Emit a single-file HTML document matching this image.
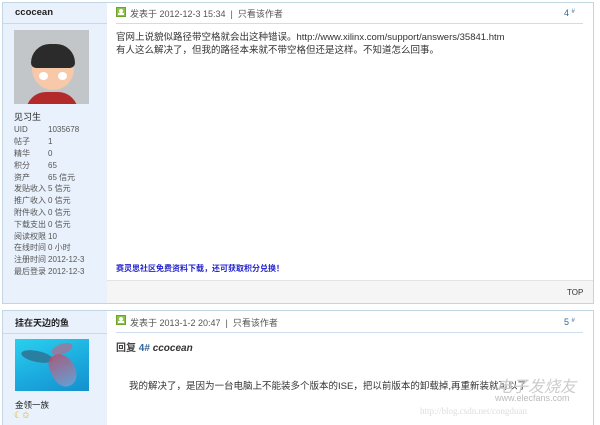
<!DOCTYPE html>
<html style="width:600px;height:425px;overflow:hidden"><head><meta charset="utf-8"><style>
*{margin:0;padding:0;box-sizing:border-box}
body{width:600px;height:425px;background:#fff;position:relative;overflow:hidden;font-family:"Liberation Sans","Noto Sans CJK SC",sans-serif;font-size:9px;color:#333}
.a{position:absolute}
.box{position:absolute;border:1px solid #c2d5e3;background:#fff}
.side{position:absolute;background:#e9f2fc}
.ico{position:absolute;width:10px;height:10px;background:#8bc34a;border:1px solid #6aa52a}
.ico:after{content:"";position:absolute;left:2px;top:1px;width:4px;height:4px;background:#fff;border-radius:50%}
.ico:before{content:"";position:absolute;left:1px;bottom:1px;width:6px;height:2px;background:#fff}
.hd{color:#555;font-size:9px}
.st{table-layout:fixed;border-collapse:collapse}
.st td{padding:0;height:11.8px;font-size:8px;color:#555;white-space:nowrap;overflow:hidden}
</style></head><body>
<!-- post 1 -->
<div class="box" style="left:2px;top:2px;width:592px;height:302px"></div>
<div class="side" style="left:3px;top:3px;width:104px;height:300px"></div>
<div class="a" style="left:3px;top:23px;width:104px;height:1px;background:#c9d9ea"></div>
<div class="a" style="left:15px;top:7px;font-weight:bold;font-size:9.5px;color:#222">ccocean</div>
<div class="a" style="left:14px;top:30px;width:75px;height:74px;background:#c2c6c9;overflow:hidden">
 <div class="a" style="left:18px;top:18px;width:42px;height:42px;border-radius:50%;background:#f7c9a8"></div>
 <div class="a" style="left:17px;top:14px;width:44px;height:24px;border-radius:22px 22px 6px 6px;background:#2b2b2b"></div>
 <div class="a" style="left:25px;top:42px;width:9px;height:8px;border-radius:50%;background:#fff"></div>
 <div class="a" style="left:44px;top:42px;width:9px;height:8px;border-radius:50%;background:#fff"></div>
 <div class="a" style="left:12px;top:62px;width:52px;height:20px;border-radius:20px 20px 0 0;background:#b32a2a"></div>
</div>
<div class="a" style="left:14px;top:110px;font-size:9px;color:#222">见习生</div>
<table class="a st" style="left:14px;top:124px;width:80px">
<colgroup><col style="width:34px"><col style="width:46px"></colgroup>
<tr><td>UID</td><td>1035678</td></tr>
<tr><td>帖子</td><td>1</td></tr>
<tr><td>精华</td><td>0</td></tr>
<tr><td>积分</td><td>65</td></tr>
<tr><td>资产</td><td>65 信元</td></tr>
<tr><td>发贴收入</td><td>5 信元</td></tr>
<tr><td>推广收入</td><td>0 信元</td></tr>
<tr><td>附件收入</td><td>0 信元</td></tr>
<tr><td>下载支出</td><td>0 信元</td></tr>
<tr><td>阅读权限</td><td>10</td></tr>
<tr><td>在线时间</td><td>0 小时</td></tr>
<tr><td>注册时间</td><td>2012-12-3</td></tr>
<tr><td>最后登录</td><td>2012-12-3</td></tr>
</table>
<div class="ico" style="left:116px;top:7px"></div>
<div class="a hd" style="left:130px;top:7px">发表于 2012-12-3 15:34 &nbsp;|&nbsp; 只看该作者</div>
<div class="a" style="left:564px;top:8px;color:#369;font-size:9px">4 <span style="font-size:6px;vertical-align:3px">#</span></div>
<div class="a" style="left:116px;top:23px;width:467px;height:1px;background:#cdddee"></div>
<div class="a" style="left:116px;top:31px;font-size:9.5px;line-height:13px;color:#333">官网上说貌似路径带空格就会出这种错误。http://www.xilinx.com/support/answers/35841.htm<br>有人这么解决了，但我的路径本来就不带空格但还是这样。不知道怎么回事。</div>
<div class="a" style="left:116px;top:263px;font-size:8px;color:#2222cc;font-weight:bold">赛灵思社区免费资料下载，还可获取积分兑换！</div>
<div class="a" style="left:107px;top:280px;width:486px;height:23px;background:#f5f5f5;border-top:1px solid #e3e3e3"></div>
<div class="a" style="left:567px;top:288px;font-size:8px;color:#333">TOP</div>
<!-- post 2 -->
<div class="box" style="left:2px;top:310px;width:592px;height:115px;border-bottom:none"></div>
<div class="side" style="left:3px;top:311px;width:104px;height:114px"></div>
<div class="a" style="left:3px;top:333px;width:104px;height:1px;background:#c9d9ea"></div>
<div class="a" style="left:15px;top:316px;font-weight:bold;font-size:9px;color:#222">挂在天边的鱼</div>
<div class="a" style="left:15px;top:339px;width:74px;height:52px;background:linear-gradient(160deg,#2ad0ee,#1aa8dd 60%,#1590cc);overflow:hidden">
 <div class="a" style="left:6px;top:12px;width:32px;height:11px;border-radius:50%;background:#2a7fa0;transform:rotate(12deg)"></div>
 <div class="a" style="left:36px;top:5px;width:22px;height:10px;border-radius:50%;background:#b86a8a;opacity:.7;transform:rotate(-20deg)"></div>
 <div class="a" style="left:36px;top:14px;width:24px;height:34px;border-radius:40% 60% 50% 50%;background:linear-gradient(#c44a6a,#7a9ed0);opacity:.8;transform:rotate(-25deg)"></div>
</div>
<div class="a" style="left:15px;top:399px;font-size:8.5px;color:#222">金领一族</div>
<div class="a" style="left:14px;top:410px;font-size:9px;color:#e8a800">☾✩</div>
<div class="ico" style="left:116px;top:315px"></div>
<div class="a hd" style="left:130px;top:316px">发表于 2013-1-2 20:47 &nbsp;|&nbsp; 只看该作者</div>
<div class="a" style="left:564px;top:317px;color:#369;font-size:9px">5 <span style="font-size:6px;vertical-align:3px">#</span></div>
<div class="a" style="left:116px;top:332px;width:467px;height:1px;background:#cdddee"></div>
<div class="a" style="left:116px;top:339px;font-size:10px;font-weight:bold;color:#444">回复 <span style="color:#369">4#</span> <i style="color:#333">ccocean</i></div>
<div class="a" style="left:129px;top:378px;font-size:9.5px;color:#333">我的解决了，是因为一台电脑上不能装多个版本的ISE，把以前版本的卸载掉,再重新装就可以了</div>
<div class="a" style="left:496px;top:373px;font-size:16px;color:#ccc;font-style:italic">电子发烧友</div>
<div class="a" style="left:495px;top:393px;font-size:9px;color:#bbb">www.elecfans.com</div>
<div class="a" style="left:420px;top:406px;font-size:9px;color:#ddd;font-family:'Liberation Serif',serif">http://blog.csdn.net/congduan</div>
</body></html>
